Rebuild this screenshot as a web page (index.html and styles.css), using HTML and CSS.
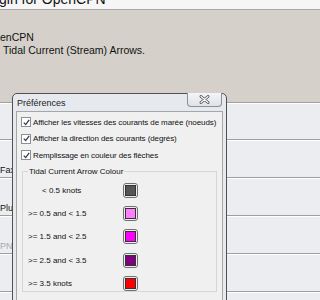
FILE: index.html
```html
<!DOCTYPE html>
<html lang="fr">
<head>
    <meta charset="UTF-8">
    <title>Préférences</title>
    <link rel="stylesheet" href="styles.css">
</head>
<body>
    <div class="top"><span class="top-title">gin for OpenCPN</span></div>
    <div class="head">
        <p class="head-line first">enCPN</p>
        <p class="head-line">Tidal Current (Stream) Arrows.</p>
    </div>
    <div class="list">
        <div class="row"></div>
        <div class="row"><span>Fax</span></div>
        <div class="row"><span>Plu</span></div>
        <div class="row"><span class="off">PN</span></div>
        <div class="row"></div>
        <div class="row"></div>
    </div>

    <div class="dlg">
        <div class="dlg-title">Préférences</div>
        <div class="close">
            <svg width="11" height="9" viewBox="0 0 11 9">
                <path d="M2 1.5 L9 7.5 M9 1.5 L2 7.5" stroke="#4a4a4a" stroke-width="2.8" stroke-linecap="round"/>
                <path d="M2 1.5 L9 7.5 M9 1.5 L2 7.5" stroke="#fff" stroke-width="1.2" stroke-linecap="round"/>
            </svg>
        </div>
        <div class="panel">
            <label class="chk"><span class="box"><svg width="7" height="7" viewBox="0 0 7 7"><path d="M0.8 3.6 L2.7 5.6 L6.2 0.9" fill="none" stroke="#2a3b5c" stroke-width="1.3"/></svg></span>Afficher les vitesses des courants de marée (noeuds)</label>
            <label class="chk"><span class="box"><svg width="7" height="7" viewBox="0 0 7 7"><path d="M0.8 3.6 L2.7 5.6 L6.2 0.9" fill="none" stroke="#2a3b5c" stroke-width="1.3"/></svg></span>Afficher la direction des courants (degrés)</label>
            <label class="chk"><span class="box"><svg width="7" height="7" viewBox="0 0 7 7"><path d="M0.8 3.6 L2.7 5.6 L6.2 0.9" fill="none" stroke="#2a3b5c" stroke-width="1.3"/></svg></span>Remplissage en couleur des flèches</label>

            <fieldset class="group">
                <legend>Tidal Current Arrow Colour</legend>
                <div class="crow"><span class="clabel first">&lt; 0.5 knots</span><span class="sw"><span class="c c0"></span></span></div>
                <div class="crow"><span class="clabel">&gt;= 0.5 and &lt; 1.5</span><span class="sw"><span class="c c1"></span></span></div>
                <div class="crow"><span class="clabel">&gt;= 1.5 and &lt; 2.5</span><span class="sw"><span class="c c2"></span></span></div>
                <div class="crow"><span class="clabel">&gt;= 2.5 and &lt; 3.5</span><span class="sw"><span class="c c3"></span></span></div>
                <div class="crow"><span class="clabel">&gt;= 3.5 knots</span><span class="sw"><span class="c c4"></span></span></div>
            </fieldset>
        </div>
    </div>
</body>
</html>
```

FILE: styles.css
```css
body {
    margin: 0;
    width: 320px;
    height: 300px;
    overflow: hidden;
    position: relative;
    background: #ecedf1;
    font-family: "Liberation Sans", Arial, sans-serif;
    color: #111;
}
.top {
    height: 9px;
    background: #f6f6f6;
    border-bottom: 1px solid #a8a8a8;
    overflow: hidden;
}
.top-title {
    display: block;
    font-size: 14px;
    line-height: 14px;
    margin-top: -8px;
    margin-left: -1px;
}
.head {
    height: 92px;
    background: #d5d1ca;
    padding-top: 21px;
    box-sizing: border-box;
    font-size: 10.5px;
}
.head-line {
    margin: 0;
    line-height: 13px;
    padding-left: 3px;
}
.head-line.first {
    padding-left: 0;
}
.list {
    border-top: 1px solid #a0a0a0;
}
.row {
    height: 34px;
    border-bottom: 1px solid #9e9e9e;
    border-top: 1px solid #fff;
    font-size: 9px;
    display: flex;
    align-items: flex-end;
    padding-bottom: 2px;
}
.row:first-child {
    height: 33px;
}
.off {
    color: #a8a8a8;
}
.dlg {
    position: absolute;
    left: 12px;
    top: 93px;
    width: 207px;
    height: 220px;
    background: #e6e9ee;
    border: 1px solid #505050;
    border-radius: 5px 5px 0 0;
    padding: 0 3px;
    font-size: 8px;
}
.dlg-title {
    height: 17px;
    line-height: 19px;
    padding-left: 1px;
    font-size: 9px;
    color: #222;
}
.close {
    position: absolute;
    top: -1px;
    right: 4px;
    width: 33px;
    height: 13px;
    border: 1px solid #8a9099;
    border-top: none;
    border-radius: 0 0 4px 4px;
    background: linear-gradient(#f4f5f7, #dfe2e7);
    display: flex;
    align-items: center;
    justify-content: center;
}
.panel {
    background: #f0f0f0;
    border: 1px solid #a6a6a6;
    height: 200px;
    padding: 2px 0 0 4px;
}
.chk {
    display: flex;
    align-items: center;
    height: 16.5px;
    gap: 2px;
    letter-spacing: -0.1px;
}
.box {
    width: 8px;
    height: 8px;
    border: 1px solid #8f8f8f;
    background: #fff;
    display: flex;
    align-items: center;
    justify-content: center;
}
.group {
    margin: 3px 0 0 1px;
    width: 188px;
    height: 120px;
    border: 1px solid #d6d6d6;
    padding: 3px 0 0 5px;
}
.group legend {
    padding: 0 1px;
    margin-left: 0;
    font-size: 8px;
}
.crow {
    display: flex;
    align-items: center;
    height: 23.4px;
}
.clabel {
    width: 95px;
}
.clabel.first {
    padding-left: 14px;
    width: 81px;
}
.sw {
    width: 13px;
    height: 13px;
    border: 1px solid #707070;
    border-radius: 3px;
    background: #eee;
    display: flex;
    align-items: center;
    justify-content: center;
}
.c {
    width: 9px;
    height: 9px;
    border: 1px solid #333;
}
.c0 { background: #555555; }
.c1 { background: #ff80ff; }
.c2 { background: #ff00ff; }
.c3 { background: #800080; }
.c4 { background: #ff0000; }
```
